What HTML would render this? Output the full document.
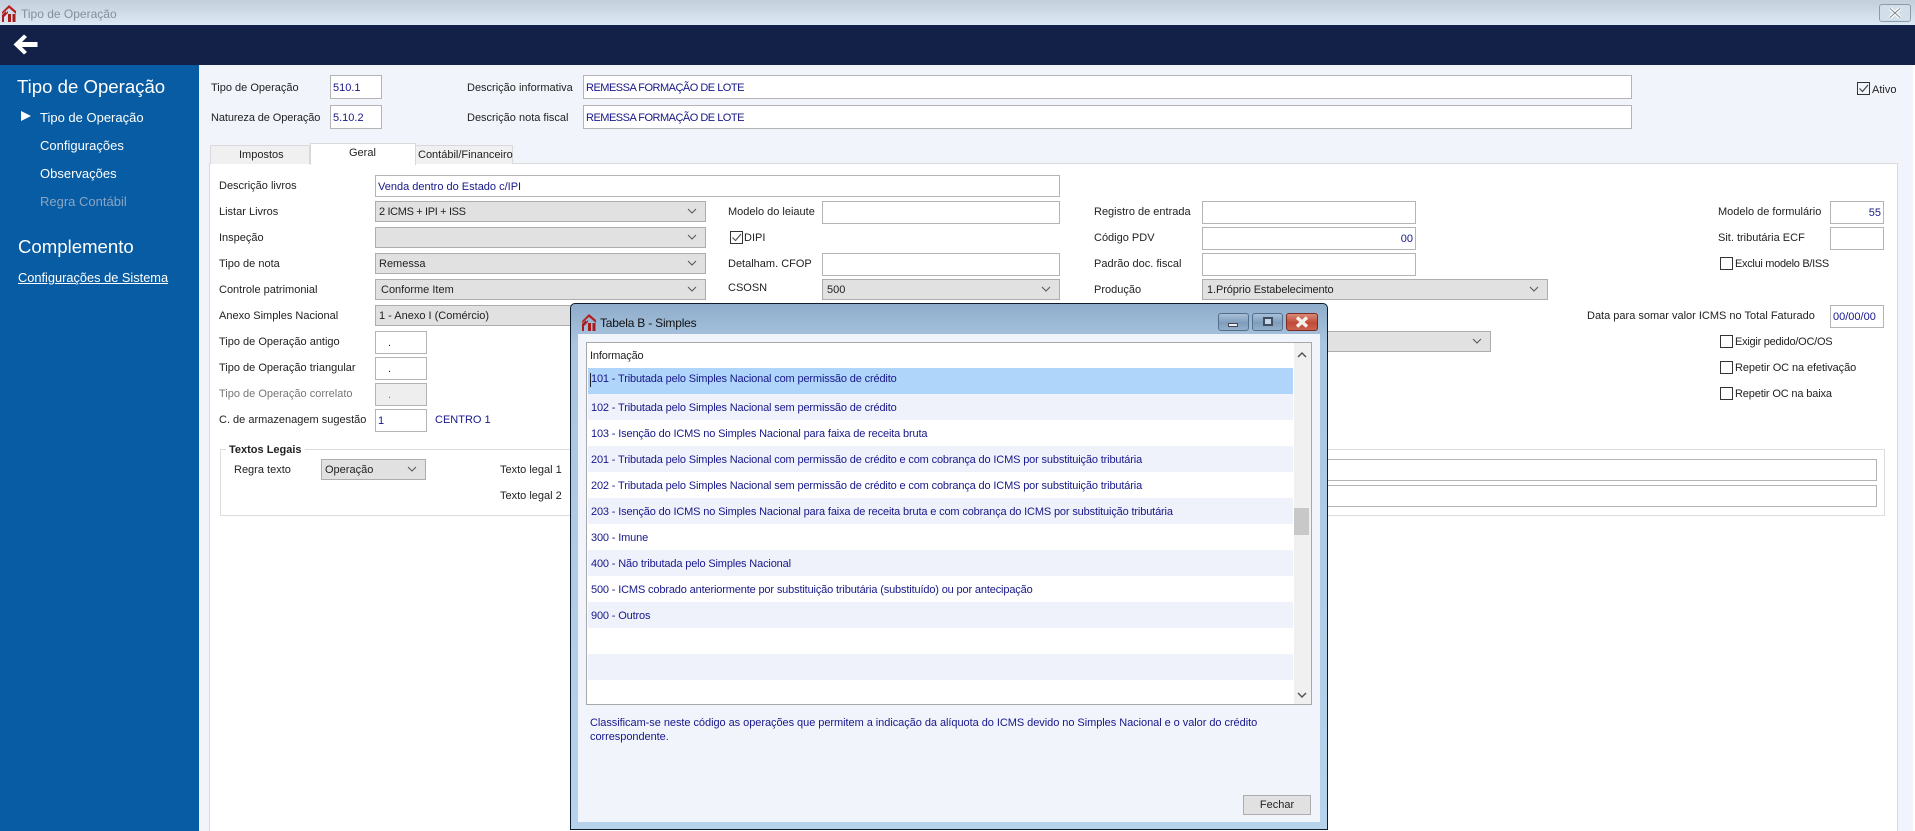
<!DOCTYPE html>
<html lang="pt">
<head>
<meta charset="utf-8">
<title>Tipo de Operação</title>
<style>
html,body{margin:0;padding:0;width:1915px;height:831px;overflow:hidden;background:#fff}
#p{position:relative;width:1915px;height:831px;overflow:hidden;font-family:"Liberation Sans",sans-serif;font-size:11px;color:#222}
#p div,#p svg{position:absolute;box-sizing:border-box}
.t{white-space:nowrap;line-height:14px}
.b{color:#17178a}
.i{background:#fff;border:1px solid #b4b4b4;height:23px;line-height:21px;padding:1px 2px 0;color:#17178a;white-space:nowrap;overflow:hidden}
.s{background:#e1e1e1;border:1px solid #adadad;height:21px;line-height:19px;padding:1px 3px 0;color:#222;white-space:nowrap;overflow:hidden}
.s svg{right:8px;top:6px}
.c{width:13px;height:13px;border:1px solid #333;background:#fff}
.r{height:26px;left:1px;width:705px;padding-left:3px;line-height:28px;color:#17178a;white-space:nowrap;letter-spacing:-.15px}
.m{color:#fff;font-size:13px}
.u{letter-spacing:-.5px}
.wb{height:18px;border:1px solid #52708e;border-radius:3px;background:linear-gradient(#a9c0d8,#7f9dbb 55%,#93afca)}
</style>
</head>
<body>
<div id="p">
  <!-- title bar -->
  <div style="left:0;top:0;width:1915px;height:25px;background:linear-gradient(#c2cfdc,#dde8f3)"></div>
  <svg style="left:2px;top:5px" width="14" height="17" viewBox="0 0 14 17"><path d="M0 7L7 0L14 6V9L7 3L0 9Z" fill="#b5201f"/><path d="M0 10L4 6V8L6 6V8L2 12V17H0Z" fill="#a81c1c"/><path d="M6 9H9V17H6ZM10.500 9H13.500V17H10.500Z" fill="#a81c1c"/></svg>
  <div class="t" style="left:21px;top:7px;font-size:12px;color:#83909c">Tipo de Operação</div>
  <div style="left:1879px;top:4px;width:32px;height:18px;border:1px solid #8c9baa;border-radius:3px;background:#d2dee9"></div>
  <svg style="left:1888px;top:7px" width="14" height="12" viewBox="0 0 14 12"><path d="M2 1.500L12 10.500M12 1.500L2 10.500" stroke="#fff" stroke-width="3.500"/><path d="M2 1.500L12 10.500M12 1.500L2 10.500" stroke="#77838f" stroke-width="1" fill="none"/></svg>
  <!-- navy -->
  <div style="left:0;top:25px;width:1915px;height:40px;background:#132148"></div>
  <svg style="left:13px;top:34px" width="25" height="21" viewBox="0 0 25 21"><path d="M11 0.500L14 3L9 8H24.500V13H9L14 18L11 20.500L0.500 10.500Z" fill="#fff"/></svg>
  <!-- page bg -->
  <div style="left:199px;top:65px;width:1714px;height:766px;background:#f2f4fc"></div>
  <!-- sidebar -->
  <div style="left:0;top:65px;width:199px;height:766px;background:#075ca3"></div>
  <div class="t" style="left:17px;top:76px;font-size:18.600px;line-height:22px;color:#fff">Tipo de Operação</div>
  <svg style="left:21px;top:111px" width="10" height="10" viewBox="0 0 10 10"><path d="M0 0L10 5L0 10Z" fill="#fff"/></svg>
  <div class="t m" style="left:40px;top:111px">Tipo de Operação</div>
  <div class="t m" style="left:40px;top:139px">Configurações</div>
  <div class="t m" style="left:40px;top:167px">Observações</div>
  <div class="t m" style="left:40px;top:195px;color:#8aa5c4">Regra Contábil</div>
  <div class="t" style="left:18px;top:236px;font-size:18.600px;line-height:22px;color:#fff">Complemento</div>
  <div class="t m" style="left:18px;top:271px;font-size:12.800px;text-decoration:underline">Configurações de Sistema</div>

  <!-- header fields -->
  <div class="t" style="left:211px;top:81px">Tipo de Operação</div>
  <div class="i" style="left:330px;top:75px;width:52px;height:24px;padding-top:2px">510.1</div>
  <div class="t" style="left:211px;top:111px;letter-spacing:-.1px">Natureza de Operação</div>
  <div class="i" style="left:330px;top:105px;width:52px;height:24px;padding-top:2px">5.10.2</div>
  <div class="t" style="left:467px;top:81px">Descrição informativa</div>
  <div class="i u" style="left:583px;top:75px;width:1049px;height:24px;padding-top:2px">REMESSA FORMAÇÃO DE LOTE</div>
  <div class="t" style="left:467px;top:111px">Descrição nota fiscal</div>
  <div class="i u" style="left:583px;top:105px;width:1049px;height:24px;padding-top:2px">REMESSA FORMAÇÃO DE LOTE</div>
  <div class="c" style="left:1857px;top:82px;background:#f2f4fc"></div>
  <svg style="left:1858px;top:83px" width="11" height="11" viewBox="0 0 11 11"><path d="M1.500 5.500L4.500 8.500L10 2" stroke="#444" stroke-width="1.200" fill="none"/></svg>
  <div class="t" style="left:1872px;top:83px">Ativo</div>

  <!-- panel and tabs -->
  <div style="left:209px;top:163px;width:1689px;height:668px;background:#fff;border:1px solid #d9d9d9;border-bottom:0"></div>
  <div style="left:210px;top:145px;width:100px;height:19px;background:#f0f0f0;border:1px solid #d9d9d9;border-bottom:0"></div>
  <div class="t" style="left:239px;top:148px">Impostos</div>
  <div style="left:415px;top:145px;width:98px;height:19px;background:#f0f0f0;border:1px solid #d9d9d9;border-bottom:0"></div>
  <div class="t" style="left:418px;top:148px">Contábil/Financeiro</div>
  <div style="left:310px;top:143px;width:106px;height:22px;background:#fff;border:1px solid #d9d9d9;border-bottom:0"></div>
  <div class="t" style="left:349px;top:146px">Geral</div>

  <!-- left column -->
  <div class="t" style="left:219px;top:179px">Descrição livros</div>
  <div class="i" style="left:375px;top:175px;width:685px;height:22px;line-height:20px">Venda dentro do Estado c/IPI</div>
  <div class="t" style="left:219px;top:205px">Listar Livros</div>
  <div class="s" style="left:375px;top:201px;width:331px;letter-spacing:-.35px">2 ICMS + IPI + ISS<svg width="10" height="6" viewBox="0 0 10 6"><path d="M1 1L5 5L9 1" stroke="#555" fill="none"/></svg></div>
  <div class="t" style="left:219px;top:231px">Inspeção</div>
  <div class="s" style="left:375px;top:227px;width:331px"><svg width="10" height="6" viewBox="0 0 10 6"><path d="M1 1L5 5L9 1" stroke="#555" fill="none"/></svg></div>
  <div class="t" style="left:219px;top:257px">Tipo de nota</div>
  <div class="s" style="left:375px;top:253px;width:331px">Remessa<svg width="10" height="6" viewBox="0 0 10 6"><path d="M1 1L5 5L9 1" stroke="#555" fill="none"/></svg></div>
  <div class="t" style="left:219px;top:283px">Controle patrimonial</div>
  <div class="s" style="left:375px;top:279px;width:331px;padding-left:5px">Conforme Item<svg width="10" height="6" viewBox="0 0 10 6"><path d="M1 1L5 5L9 1" stroke="#555" fill="none"/></svg></div>
  <div class="t" style="left:219px;top:309px">Anexo Simples Nacional</div>
  <div class="s" style="left:375px;top:305px;width:331px">1 - Anexo I (Comércio)</div>
  <div class="t" style="left:219px;top:335px">Tipo de Operação antigo</div>
  <div class="i" style="left:375px;top:331px;width:52px;padding-left:12px">.</div>
  <div class="t" style="left:219px;top:361px">Tipo de Operação triangular</div>
  <div class="i" style="left:375px;top:357px;width:52px;padding-left:12px">.</div>
  <div class="t" style="left:219px;top:387px;color:#777">Tipo de Operação correlato</div>
  <div class="i" style="left:375px;top:383px;width:52px;padding-left:12px;background:#eee;color:#777">.</div>
  <div class="t" style="left:219px;top:413px">C. de armazenagem sugestão</div>
  <div class="i" style="left:375px;top:409px;width:52px">1</div>
  <div class="t b" style="left:435px;top:413px">CENTRO 1</div>

  <!-- textos legais -->
  <div style="left:220px;top:449px;width:1665px;height:67px;border:1px solid #dcdcdc"></div>
  <div class="t" style="left:226px;top:443px;background:#fff;padding:0 3px;font-weight:bold">Textos Legais</div>
  <div class="t" style="left:234px;top:463px">Regra texto</div>
  <div class="s" style="left:321px;top:459px;width:105px">Operação<svg style="right:8px" width="10" height="6" viewBox="0 0 10 6"><path d="M1 1L5 5L9 1" stroke="#555" fill="none"/></svg></div>
  <div class="t" style="left:500px;top:463px">Texto legal 1</div>
  <div class="t" style="left:500px;top:489px">Texto legal 2</div>
  <div class="i" style="left:575px;top:459px;width:1302px;height:22px"></div>
  <div class="i" style="left:575px;top:485px;width:1302px;height:22px"></div>

  <!-- middle column -->
  <div class="t" style="left:728px;top:205px">Modelo do leiaute</div>
  <div class="i" style="left:822px;top:201px;width:238px"></div>
  <div class="c" style="left:730px;top:231px"></div>
  <svg style="left:731px;top:232px" width="11" height="11" viewBox="0 0 11 11"><path d="M1.500 5.500L4.500 8.500L10 2" stroke="#555" stroke-width="1.200" fill="none"/></svg>
  <div class="t" style="left:744px;top:231px">DIPI</div>
  <div class="t" style="left:728px;top:257px">Detalham. CFOP</div>
  <div class="i" style="left:822px;top:253px;width:238px"></div>
  <div class="t" style="left:728px;top:281px">CSOSN</div>
  <div class="s" style="left:822px;top:279px;width:238px;padding-left:4px">500<svg width="10" height="6" viewBox="0 0 10 6"><path d="M1 1L5 5L9 1" stroke="#555" fill="none"/></svg></div>

  <div class="t" style="left:1094px;top:205px">Registro de entrada</div>
  <div class="i" style="left:1202px;top:201px;width:214px"></div>
  <div class="t" style="left:1094px;top:231px">Código PDV</div>
  <div class="i" style="left:1202px;top:227px;width:214px;text-align:right">00</div>
  <div class="t" style="left:1094px;top:257px">Padrão doc. fiscal</div>
  <div class="i" style="left:1202px;top:253px;width:214px"></div>
  <div class="t" style="left:1094px;top:283px">Produção</div>
  <div class="s" style="left:1202px;top:279px;width:346px;padding-left:4px;letter-spacing:-.1px">1.Próprio Estabelecimento<svg width="10" height="6" viewBox="0 0 10 6"><path d="M1 1L5 5L9 1" stroke="#555" fill="none"/></svg></div>
  <div class="s" style="left:1202px;top:331px;width:289px"><svg width="10" height="6" viewBox="0 0 10 6"><path d="M1 1L5 5L9 1" stroke="#555" fill="none"/></svg></div>

  <!-- right column -->
  <div class="t" style="left:1718px;top:205px">Modelo de formulário</div>
  <div class="i" style="left:1830px;top:201px;width:54px;text-align:right">55</div>
  <div class="t" style="left:1718px;top:231px">Sit. tributária ECF</div>
  <div class="i" style="left:1830px;top:227px;width:54px"></div>
  <div class="c" style="left:1720px;top:257px"></div>
  <div class="t" style="left:1735px;top:257px;letter-spacing:-.3px">Exclui modelo B/ISS</div>
  <div class="t" style="left:1587px;top:309px">Data para somar valor ICMS no Total Faturado</div>
  <div class="i" style="left:1830px;top:305px;width:54px">00/00/00</div>
  <div class="c" style="left:1720px;top:335px"></div>
  <div class="t" style="left:1735px;top:335px;letter-spacing:-.25px">Exigir pedido/OC/OS</div>
  <div class="c" style="left:1720px;top:361px"></div>
  <div class="t" style="left:1735px;top:361px;letter-spacing:-.1px">Repetir OC na efetivação</div>
  <div class="c" style="left:1720px;top:387px"></div>
  <div class="t" style="left:1735px;top:387px;letter-spacing:-.15px">Repetir OC na baixa</div>

  <!-- dialog -->
  <div style="left:570px;top:303px;width:758px;height:527px;border:1px solid #0c1c2a;border-radius:5px 5px 0 0;background:linear-gradient(#8facca,#a9c5e0 40px,#b7d3ec)"></div>
  <svg style="left:582px;top:314px" width="14" height="17" viewBox="0 0 14 17"><path d="M0 7L7 0L14 6V9L7 3L0 9Z" fill="#b5201f"/><path d="M0 10L4 6V8L6 6V8L2 12V17H0Z" fill="#a81c1c"/><path d="M6 9H9V17H6ZM10.500 9H13.500V17H10.500Z" fill="#a81c1c"/></svg>
  <div class="t" style="left:600px;top:316px;font-size:12px;color:#111;letter-spacing:-.2px">Tabela B - Simples</div>
  <div class="wb" style="left:1218px;top:313px;width:31px"></div>
  <div style="left:1228px;top:323px;width:10px;height:4px;background:#e9eef3;border:1px solid #445"></div>
  <div class="wb" style="left:1252px;top:313px;width:31px"></div>
  <div style="left:1263px;top:317px;width:10px;height:9px;border:2px solid #3f4f63;background:#c8d7e6"></div>
  <div class="wb" style="left:1286px;top:313px;width:32px;border-color:#7d2a22;background:linear-gradient(#d98a78,#c24a36 55%,#c86450)"></div>
  <svg style="left:1295px;top:316px" width="14" height="12" viewBox="0 0 14 12"><path d="M2 1.500L12 10.500M12 1.500L2 10.500" stroke="#f6f0ec" stroke-width="3.500"/></svg>

  <div style="left:578px;top:334px;width:742px;height:488px;background:#f2f4fc"></div>
  <!-- list -->
  <div style="left:586px;top:342px;width:726px;height:363px;background:#fff;border:1px solid #a8a8a8;overflow:hidden">
    <div class="t" style="left:3px;top:6px;color:#222;letter-spacing:-.15px">Informação</div>
    <div class="r" style="top:25px;background:#b0d5fb;line-height:23px">101 - Tributada pelo Simples Nacional com permissão de crédito</div>
    <div class="r" style="top:51px;background:#f0f2fb">102 - Tributada pelo Simples Nacional sem permissão de crédito</div>
    <div class="r" style="top:77px">103 - Isenção do ICMS no Simples Nacional para faixa de receita bruta</div>
    <div class="r" style="top:103px;background:#f0f2fb">201 - Tributada pelo Simples Nacional com permissão de crédito e com cobrança do ICMS por substituição tributária</div>
    <div class="r" style="top:129px">202 - Tributada pelo Simples Nacional sem permissão de crédito e com cobrança do ICMS por substituição tributária</div>
    <div class="r" style="top:155px;background:#f0f2fb">203 - Isenção do ICMS no Simples Nacional para faixa de receita bruta e com cobrança do ICMS por substituição tributária</div>
    <div class="r" style="top:181px">300 - Imune</div>
    <div class="r" style="top:207px;background:#f0f2fb">400 - Não tributada pelo Simples Nacional</div>
    <div class="r" style="top:233px">500 - ICMS cobrado anteriormente por substituição tributária (substituído) ou por antecipação</div>
    <div class="r" style="top:259px;background:#f0f2fb">900 - Outros</div>
    <div class="r" style="top:285px"></div>
    <div class="r" style="top:311px;background:#f0f2fb"></div>
  </div>
  <div style="left:590px;top:373px;width:1px;height:14px;background:#222"></div>
  <div style="left:1294px;top:343px;width:17px;height:361px;background:#f0f0f0"></div>
  <div style="left:1294px;top:508px;width:15px;height:27px;background:#c8c8c8"></div>
  <svg style="left:1297px;top:351px" width="10" height="7" viewBox="0 0 10 7"><path d="M1 6L5 2L9 6" stroke="#555" stroke-width="1.500" fill="none"/></svg>
  <svg style="left:1297px;top:692px" width="10" height="7" viewBox="0 0 10 7"><path d="M1 1L5 5L9 1" stroke="#555" stroke-width="1.500" fill="none"/></svg>

  <div class="t b" style="left:590px;top:716px;width:700px;white-space:normal;letter-spacing:-.05px">Classificam-se neste código as operações que permitem a indicação da alíquota do ICMS devido no Simples Nacional e o valor do crédito correspondente.</div>
  <div style="left:1243px;top:795px;width:68px;height:20px;background:#e1e1e1;border:1px solid #adadad;text-align:center;line-height:18px;color:#222">Fechar</div>
</div>
</body>
</html>
